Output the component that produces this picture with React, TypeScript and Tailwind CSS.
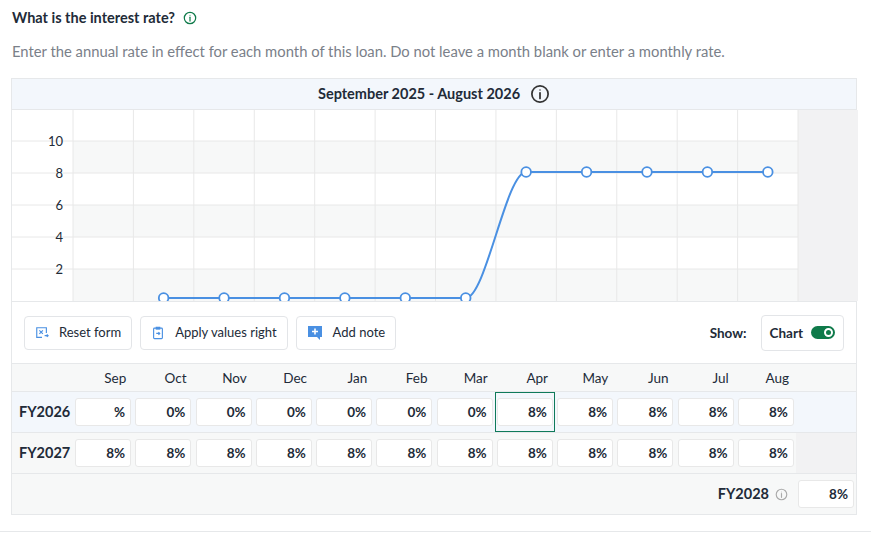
import React from "react";

const months = ["Sep","Oct","Nov","Dec","Jan","Feb","Mar","Apr","May","Jun","Jul","Aug"];
const fy26 = ["%","0%","0%","0%","0%","0%","0%","8%","8%","8%","8%","8%"];
const fy27 = Array(12).fill("8%");

function Info({ cls = "" }: { cls?: string }) {
  return (
    <svg viewBox="0 0 16 16" className={cls} fill="none" stroke="currentColor" strokeWidth="1.4">
      <circle cx="8" cy="8" r="6.5" />
      <line x1="8" y1="7" x2="8" y2="11.5" strokeLinecap="round" />
      <circle cx="8" cy="4.8" r="0.6" fill="currentColor" stroke="none" />
    </svg>
  );
}

function Chart() {
  const colX = (i: number) => 61 + i * 60.42;
  const cx = (i: number) => colX(i) + 30.2;
  const y = (v: number) => 188 - v * 15.75;
  const pts = fy26.map((v, i) => ({ i, v: parseFloat(v) })).filter(p => !isNaN(p.v));
  let d = "";
  pts.forEach((p, k) => {
    const X = cx(p.i), Y = y(p.v);
    if (k === 0) d += `M${X},${Y}`;
    else {
      const q = pts[k - 1];
      const PX = cx(q.i), PY = y(q.v);
      const dx = (X - PX) / 3;
      d += ` C${PX + dx},${PY} ${X - dx},${Y} ${X},${Y}`;
    }
  });
  return (
    <svg width="846" height="191" className="block">
      {[0, 1, 2, 3, 4].map(k => (
        <rect key={k} x={61} y={31 + k * 32} width={725} height={32} fill={k % 2 === 0 ? "#f7f8f8" : "#ffffff"} />
      ))}
      <rect x={786} y={0} width={60} height={191} fill="#f2f2f3" />
      {[31, 63, 95, 127, 159].map(yy => (
        <line key={yy} x1={0} x2={786} y1={yy} y2={yy} stroke="#e8e8e8" />
      ))}
      {Array.from({ length: 13 }).map((_, i) => (
        <line key={i} x1={colX(i)} x2={colX(i)} y1={0} y2={191} stroke="#e8e8e8" />
      ))}
      {[10, 8, 6, 4, 2].map((v, k) => (
        <text key={v} x={51} y={36 + k * 32} textAnchor="end" fontSize="13" fill="#222b38" fontFamily="Lato">{v}</text>
      ))}
      <path d={d} fill="none" stroke="#4a90e2" strokeWidth="2" />
      {pts.map(p => (
        <circle key={p.i} cx={cx(p.i)} cy={y(p.v)} r={4.8} fill="#fff" stroke="#4a90e2" strokeWidth="1.8" />
      ))}
    </svg>
  );
}

function Btn({ icon, label }: { icon: React.ReactNode; label: string }) {
  return (
    <button className="h-[34px] px-[10px] flex items-center gap-[10px] border border-[#e3e5e8] rounded-[4px] bg-white text-[13px] text-[#222b38]">
      {icon}
      {label}
    </button>
  );
}

function Cell({ v, active }: { v: string; active?: boolean }) {
  return (
    <div className={`h-full flex items-center justify-center ${active ? "outline outline-1 outline-[#0f7a5a] -outline-offset-1" : ""}`}>
      <div className="h-[28px] w-[56px] bg-white rounded-[3px] border border-[#e8e8e8] flex items-center justify-end pr-[5px] text-[13.5px] font-bold text-[#222b38]">{v}</div>
    </div>
  );
}

export default function App() {
  return (
    <div className="w-[871px] h-[533px] bg-white text-[#222b38] pt-[9px]" style={{ fontFamily: "Lato, 'Noto Sans', sans-serif" }}>
      <div className="px-[12px] flex items-center gap-[8px] text-[14.5px] font-bold h-[18px]">
        What is the interest rate?
        <Info cls="w-[14px] h-[14px] text-[#0f7a4a]" />
      </div>
      <div className="px-[12px] mt-[13px] text-[14.8px] text-[#7a8089]">Enter the annual rate in effect for each month of this loan. Do not leave a month blank or enter a monthly rate.</div>
      <div className="mt-[16px] mx-[11px] w-[846px] border border-[#e6e8ea]">
        <div className="h-[31px] bg-[#f3f7fc] border-b border-[#e6e8ea] flex items-center justify-center gap-[10px] text-[14.5px] font-bold">
          September 2025 - August 2026
          <Info cls="w-[20px] h-[20px] text-[#333]" />
        </div>
        <Chart />
        <div className="h-[62px] border-t border-[#e6e8ea] flex items-center px-[12px] gap-[8px]">
          <Btn label="Reset form" icon={
            <svg viewBox="0 0 16 16" className="w-[14px] h-[14px]" fill="none" stroke="#4a90e2" strokeWidth="1.3">
              <path d="M13 8V2H2v11h6" />
              <path d="M5 5l4 4M9 5l-4 4" />
              <path d="M11 11h4m-1.5-1.5L15 11l-1.5 1.5" />
            </svg>} />
          <Btn label="Apply values right" icon={
            <svg viewBox="0 0 16 16" className="w-[14px] h-[14px]" fill="none" stroke="#4a90e2" strokeWidth="1.3">
              <rect x="3" y="2.5" width="10" height="12" rx="1" />
              <rect x="6" y="1.5" width="4" height="2" fill="#4a90e2" />
              <path d="M6 8.5h4m-1.5-1.5L10 8.5 8.5 10" />
            </svg>} />
          <Btn label="Add note" icon={
            <svg viewBox="0 0 16 16" className="w-[16px] h-[16px]">
              <path d="M1 1h14v11h-2v3l-3-3H1z" fill="#4a90e2" />
              <path d="M8 3.5v6M5 6.5h6" stroke="#fff" strokeWidth="1.6" />
            </svg>} />
          <div className="flex-1" />
          <span className="text-[13.5px] font-bold mr-[6px]">Show:</span>
          <div className="h-[36px] px-[8px] flex items-center gap-[8px] border border-[#e3e5e8] rounded-[4px] text-[13.5px] font-bold">
            Chart
            <div className="w-[24px] h-[13px] rounded-full bg-[#0f7a4a] flex items-center justify-end pr-[2px]">
              <div className="w-[9px] h-[9px] rounded-full border-2 border-white bg-[#0f7a4a]" />
            </div>
          </div>
        </div>
        <div className="grid grid-cols-[61px_repeat(12,1fr)_60px] border-t border-[#e6e8ea]">
          <div className="h-[28px] bg-[#f7f8f8] col-span-14 grid grid-cols-subgrid border-b border-[#e6e8ea]">
            <div />
            {months.map(m => <div key={m} className="flex items-center justify-end pr-[7px] text-[13.5px]">{m}</div>)}
            <div />
          </div>
          <div className="h-[41px] bg-[#f3f7fc] col-span-14 grid grid-cols-subgrid items-center border-b border-[#e6e8ea]">
            <div className="pl-[7px] text-[14.5px] font-bold">FY2026</div>
            {fy26.map((v, i) => <Cell key={i} v={v} active={i === 7} />)}
            <div />
          </div>
          <div className="h-[41px] bg-[#f7f8f8] col-span-14 grid grid-cols-subgrid items-center border-b border-[#e6e8ea]">
            <div className="pl-[7px] text-[14.5px] font-bold">FY2027</div>
            {fy27.map((v, i) => <Cell key={i} v={v} />)}
            <div className="h-full bg-[#f2f2f3]" />
          </div>
        </div>
        <div className="h-[40px] bg-[#f7f8f8] flex items-center justify-end pr-[2px] gap-[6px]">
          <span className="text-[14.5px] font-bold">FY2028</span>
          <Info cls="w-[13px] h-[13px] text-[#aaa]" />
          <div className="ml-[4px] h-[28px] w-[56px] bg-white rounded-[3px] border border-[#e8e8e8] flex items-center justify-end pr-[5px] text-[13.5px] font-bold">8%</div>
        </div>
      </div>
      <div className="mt-[16px] border-t border-[#e6e8ea]" />
    </div>
  );
}
